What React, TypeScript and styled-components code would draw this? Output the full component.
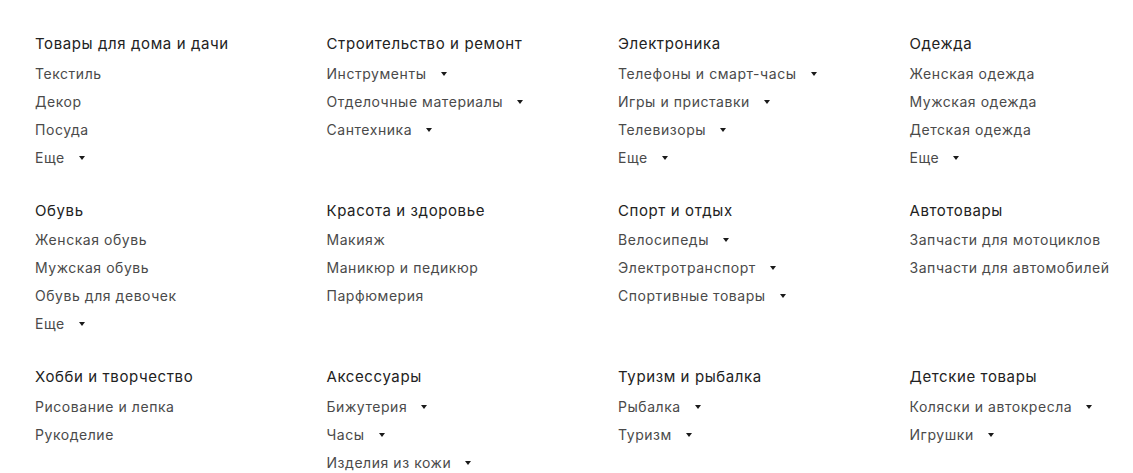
import styled, { createGlobalStyle } from "styled-components";

const GlobalStyle = createGlobalStyle`
  html, body {
    margin: 0;
    padding: 0;
    background: #ffffff;
  }

  body {
    font-family: Inter, "Noto Sans", "Liberation Sans", sans-serif;
    -webkit-font-smoothing: antialiased;
  }
`

type Link = { title: string; more?: boolean }
type Section = { title: string; links: Link[] }

const sections: Section[] = [
  {
    title: "Товары для дома и дачи",
    links: [{ title: "Текстиль" }, { title: "Декор" }, { title: "Посуда" }, { title: "Еще", more: true }],
  },
  {
    title: "Строительство и ремонт",
    links: [
      { title: "Инструменты", more: true },
      { title: "Отделочные материалы", more: true },
      { title: "Сантехника", more: true },
    ],
  },
  {
    title: "Электроника",
    links: [
      { title: "Телефоны и смарт-часы", more: true },
      { title: "Игры и приставки", more: true },
      { title: "Телевизоры", more: true },
      { title: "Еще", more: true },
    ],
  },
  {
    title: "Одежда",
    links: [
      { title: "Женская одежда" },
      { title: "Мужская одежда" },
      { title: "Детская одежда" },
      { title: "Еще", more: true },
    ],
  },
  {
    title: "Обувь",
    links: [
      { title: "Женская обувь" },
      { title: "Мужская обувь" },
      { title: "Обувь для девочек" },
      { title: "Еще", more: true },
    ],
  },
  {
    title: "Красота и здоровье",
    links: [{ title: "Макияж" }, { title: "Маникюр и педикюр" }, { title: "Парфюмерия" }],
  },
  {
    title: "Спорт и отдых",
    links: [
      { title: "Велосипеды", more: true },
      { title: "Электротранспорт", more: true },
      { title: "Спортивные товары", more: true },
    ],
  },
  {
    title: "Автотовары",
    links: [{ title: "Запчасти для мотоциклов" }, { title: "Запчасти для автомобилей" }],
  },
  {
    title: "Хобби и творчество",
    links: [{ title: "Рисование и лепка" }, { title: "Рукоделие" }],
  },
  {
    title: "Аксессуары",
    links: [
      { title: "Бижутерия", more: true },
      { title: "Часы", more: true },
      { title: "Изделия из кожи", more: true },
    ],
  },
  {
    title: "Туризм и рыбалка",
    links: [
      { title: "Рыбалка", more: true },
      { title: "Туризм", more: true },
    ],
  },
  {
    title: "Детские товары",
    links: [
      { title: "Коляски и автокресла", more: true },
      { title: "Игрушки", more: true },
    ],
  },
]

const Catalog = styled.nav`
  padding: 34px 0 0 35px;
  display: grid;
  grid-template-columns: repeat(3, 291.5px) 1fr;
  row-gap: 29.5px;
  overflow: hidden;
`

const Group = styled.div`
  display: flex;
  flex-direction: column;
  align-items: flex-start;
`

const GroupTitle = styled.h3`
  margin: 0 0 5px;
  font-size: 15px;
  line-height: 20px;
  font-weight: 400;
  letter-spacing: 0.6px;
  color: #222222;
  white-space: nowrap;
`

const GroupLink = styled.a`
  display: flex;
  align-items: center;
  height: 28px;
  font-size: 14px;
  letter-spacing: 0.55px;
  color: #4a4a4a;
  text-decoration: none;
  white-space: nowrap;
  cursor: pointer;
`

const Caret = styled.span`
  margin-left: 14px;
  margin-top: 1px;
  width: 0;
  height: 0;
  border-left: 3px solid transparent;
  border-right: 3px solid transparent;
  border-top: 4px solid #1a1a1a;
`

export default function App() {
  return (
    <>
      <GlobalStyle />
      <Catalog>
        {sections.map((section) => (
          <Group key={section.title}>
            <GroupTitle>{section.title}</GroupTitle>
            {section.links.map((link) => (
              <GroupLink key={link.title}>
                {link.title}
                {link.more && <Caret />}
              </GroupLink>
            ))}
          </Group>
        ))}
      </Catalog>
    </>
  )
}
